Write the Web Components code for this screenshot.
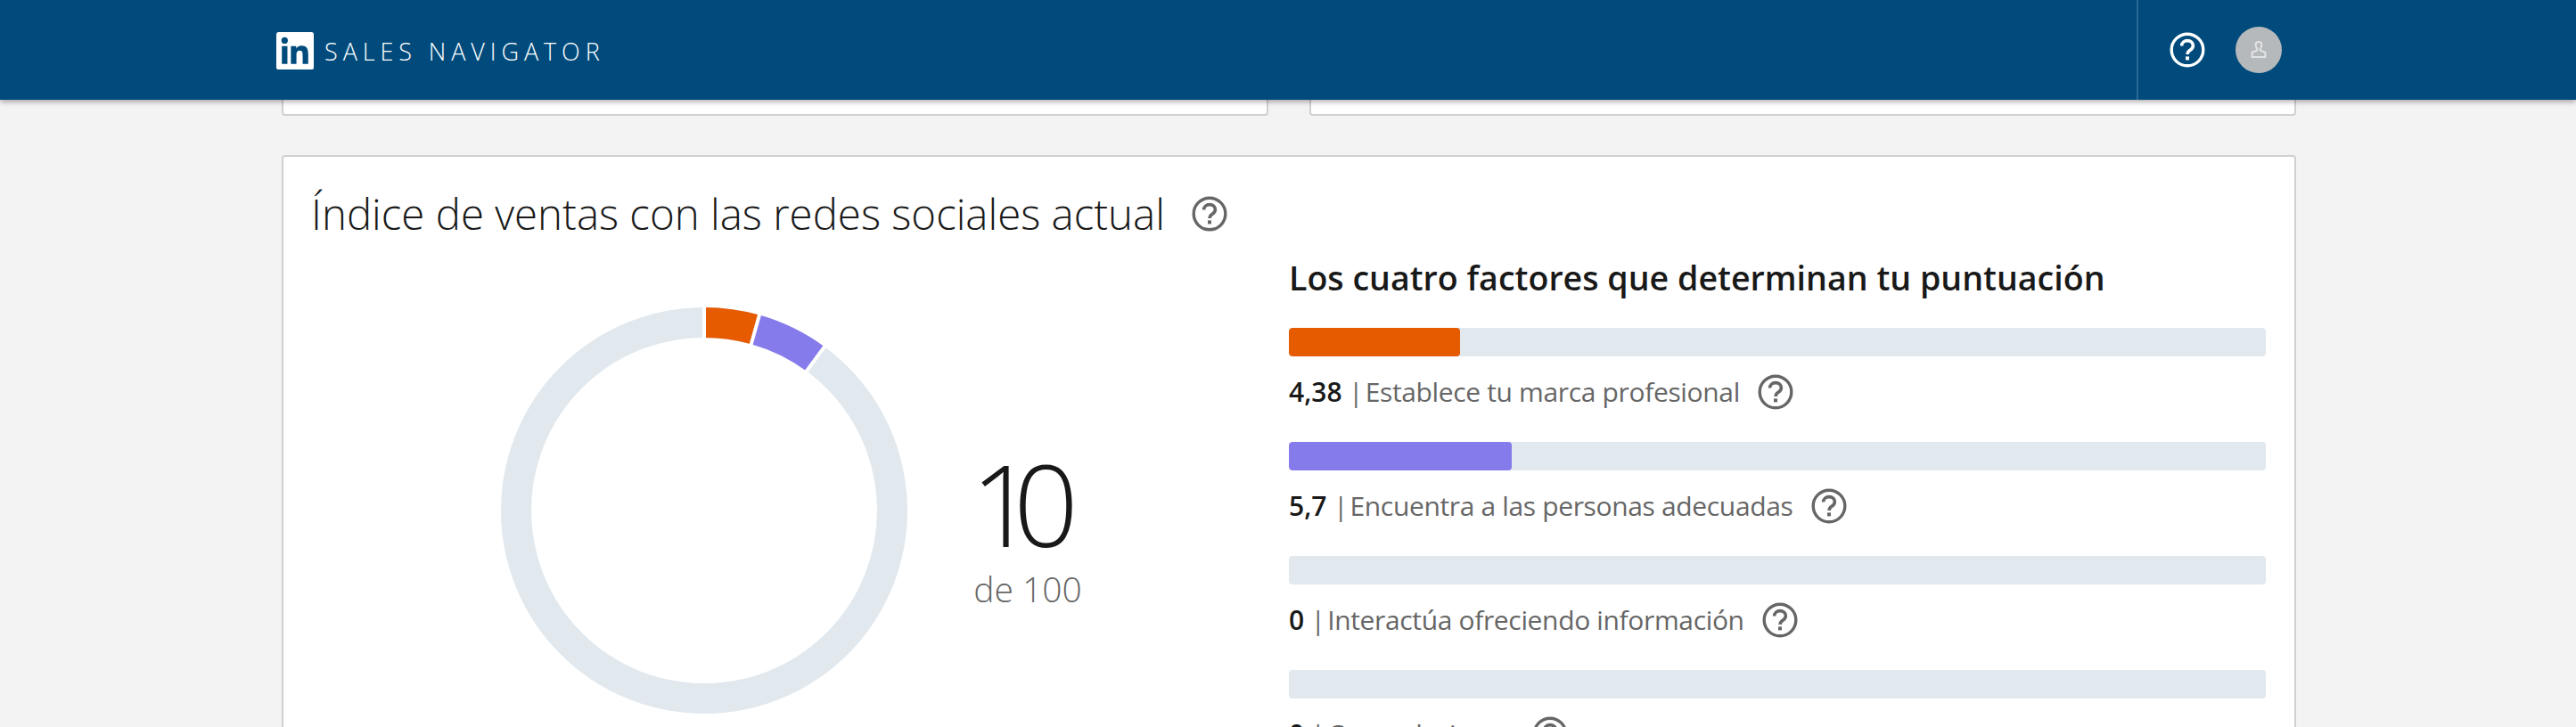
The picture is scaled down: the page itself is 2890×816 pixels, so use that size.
<!DOCTYPE html>
<html lang="es">
<head>
<meta charset="utf-8">
<title>Sales Navigator</title>
<style>
  html, body { margin: 0; height: 816px; overflow: hidden; background: #f3f3f3; }
  body { font-family: "Open Sans", "Noto Sans", sans-serif; color: #191919; }
</style>
</head>
<body>
<sn-header></sn-header>
<sn-page>
  <sn-ssi-card>
    <sn-donut slot="chart" score="10" max="100"></sn-donut>
    <sn-factor slot="factors" value="4,38" pct="17.5" color="#e65a00" label="Establece tu marca profesional"></sn-factor>
    <sn-factor slot="factors" value="5,7" pct="22.8" color="#867bea" label="Encuentra a las personas adecuadas"></sn-factor>
    <sn-factor slot="factors" value="0" pct="0" color="#867bea" label="Interactúa ofreciendo información"></sn-factor>
    <sn-factor slot="factors" value="0" pct="0" color="#867bea" label="Crea relaciones"></sn-factor>
  </sn-ssi-card>
</sn-page>
<script>
const HELP_SVG = `<svg viewBox="0 0 40 40" fill="none" stroke="currentColor" stroke-width="3.4">
  <circle cx="20" cy="20" r="17.8"/>
  <path d="M13.6 15.6c0-3.7 2.8-6 6.4-6s6.4 2.2 6.4 5.6c0 2.6-1.5 3.9-3.3 5.1-1.9 1.300-3 2.300-3 4.700" stroke-width="3.6"/>
  <rect x="18" y="27.400" width="4" height="4" fill="currentColor" stroke="none"/>
</svg>`;

class SnHelp extends HTMLElement {
  connectedCallback() {
    this.attachShadow({ mode: 'open' });
    this.shadowRoot.innerHTML = `
      <style>
        :host { display: inline-flex; width: 40px; height: 40px; color: #666; flex: none; }
        svg { width: 100%; height: 100%; display: block; }
      </style>
      ${HELP_SVG}
    `;
  }
}
customElements.define('sn-help', SnHelp);

class SnHeader extends HTMLElement {
  connectedCallback() {
    this.attachShadow({ mode: 'open' });
    this.shadowRoot.innerHTML = `
      <style>
        :host {
          display: flex;
          position: relative;
          z-index: 10;
          height: 112px;
          background: #004b7c;
          box-shadow: 0 2px 6px rgba(0,0,0,0.35);
          padding-left: 310px;
          align-items: center;
        }
        .logo { width: 42px; height: 42px; display: block; flex: none; margin-top: 1px; }
        .name {
          margin: 2px 0 0 12px;
          font: 300 27px "Open Sans", sans-serif;
          letter-spacing: 5.9px;
          color: #fff;
          white-space: nowrap;
        }
        .actions {
          margin-left: auto;
          width: 493px;
          height: 100%;
          box-sizing: border-box;
          border-left: 2px solid #2b6a94;
          display: flex;
          align-items: center;
          padding-left: 35px;
        }
        sn-help { color: #fff; }
        .avatar {
          width: 52px;
          height: 52px;
          margin-left: 34px;
          border-radius: 50%;
          background: #b6b9bc;
          display: flex;
          align-items: center;
          justify-content: center;
        }
        .avatar svg { width: 22px; height: 22px; }
      </style>
      <svg class="logo" viewBox="0 0 24 24">
        <rect width="24" height="24" rx="1.500" fill="#fff"/>
        <path fill="#004b7c" d="M20.447 20.452h-3.554v-5.569c0-1.328-.027-3.037-1.852-3.037-1.853 0-2.136 1.445-2.136 2.939v5.667H9.351V9h3.414v1.561h.046c.477-.9 1.637-1.85 3.37-1.85 3.601 0 4.267 2.37 4.267 5.455v6.286zM5.337 7.433a2.062 2.062 0 0 1-2.063-2.065 2.064 2.064 0 1 1 2.063 2.065zm1.782 13.019H3.555V9h3.564v11.452z"/>
      </svg>
      <span class="name">SALES NAVIGATOR</span>
      <div class="actions">
        <sn-help></sn-help>
        <div class="avatar">
          <svg viewBox="0 0 22 22" fill="none" stroke="#e3e4e5" stroke-width="2">
            <path d="M11 2c-2.200 0-3.400 1.500-3.400 3.600 0 2 .9 3.300 1.700 4.100v1.600L3.600 14v5h14.800v-5l-5.700-2.700V9.700c.8-.8 1.700-2.100 1.700-4.100C14.400 3.500 13.200 2 11 2z"/>
          </svg>
        </div>
      </div>
    `;
  }
}
customElements.define('sn-header', SnHeader);

class SnPage extends HTMLElement {
  connectedCallback() {
    this.attachShadow({ mode: 'open' });
    this.shadowRoot.innerHTML = `
      <style>
        :host { display: block; padding: 0 314px 0 316px; }
        .top { display: grid; grid-template-columns: 1fr 1fr; column-gap: 46px; }
        .stub {
          height: 16px;
          background: #fff;
          border: 2px solid #d0d0d0;
          border-top: 0;
          border-radius: 0 0 4px 4px;
        }
        .rest { margin-top: 44px; }
      </style>
      <div class="top"><div class="stub"></div><div class="stub"></div></div>
      <div class="rest"><slot></slot></div>
    `;
  }
}
customElements.define('sn-page', SnPage);

class SnSsiCard extends HTMLElement {
  connectedCallback() {
    this.attachShadow({ mode: 'open' });
    this.shadowRoot.innerHTML = `
      <style>
        :host {
          display: block;
          box-sizing: border-box;
          background: #fff;
          border: 2px solid #d0d0d0;
          border-radius: 4px;
          padding: 31px 32px 0 31px;
        }
        .title { display: flex; align-items: center; gap: 30px; height: 66px; }
        h2 { margin: 0; font: 350 47.4px/66px "Open Sans", sans-serif; color: #191919; white-space: nowrap; }
        .cols { display: grid; grid-template-columns: 1097px 1096px; }
        .chart { padding-top: 71px; }
        h3 { margin: 11px 0 0; font: 600 37.6px/56px "Open Sans", sans-serif; color: #191919; white-space: nowrap; }
        .factors { display: flex; flex-direction: column; margin-top: 28px; }
      </style>
      <div class="title"><h2>Índice de ventas con las redes sociales actual</h2><sn-help></sn-help></div>
      <div class="cols">
        <div class="chart"><slot name="chart"></slot></div>
        <div>
          <h3>Los cuatro factores que determinan tu puntuación</h3>
          <div class="factors"><slot name="factors"></slot></div>
        </div>
      </div>
    `;
  }
}
customElements.define('sn-ssi-card', SnSsiCard);

class SnDonut extends HTMLElement {
  connectedCallback() {
    this.attachShadow({ mode: 'open' });
    const sep = [0, 15.77, 36.29].map(a =>
      `<line x1="229" y1="0" x2="229" y2="42" stroke="#fff" stroke-width="4" transform="rotate(${a} 229 229)"/>`
    ).join('');
    this.shadowRoot.innerHTML = `
      <style>
        :host { display: flex; align-items: center; padding-left: 212px; }
        svg { width: 458px; height: 458px; display: block; flex: none; }
        .score { width: 140px; margin-left: 64px; margin-top: 36px; display: flex; flex-direction: column; align-items: center; }
        .num { font: 300 128px/140px "Open Sans", sans-serif; letter-spacing: -25px; margin-right: 32px; color: #191919; }
        .of { font: 300 39px/52px "Open Sans", sans-serif; color: #666; white-space: nowrap; }
      </style>
      <svg viewBox="0 0 458 458" fill="none" stroke-width="34">
        <circle cx="229" cy="229" r="211" stroke="#e1e8ee"/>
        <g transform="rotate(-90 229 229)">
          <circle cx="229" cy="229" r="211" pathLength="100" stroke="#e65a00" stroke-dasharray="4.38 95.62"/>
          <circle cx="229" cy="229" r="211" pathLength="100" stroke="#867bea" stroke-dasharray="5.7 94.3" stroke-dashoffset="-4.38"/>
        </g>
        ${sep}
      </svg>
      <div class="score">
        <div class="num">${this.getAttribute('score')}</div>
        <div class="of">de ${this.getAttribute('max')}</div>
      </div>
    `;
  }
}
customElements.define('sn-donut', SnDonut);

class SnFactor extends HTMLElement {
  connectedCallback() {
    this.attachShadow({ mode: 'open' });
    this.shadowRoot.innerHTML = `
      <style>
        :host { display: block; height: 128px; font: 400 30px/40px "Open Sans", sans-serif; color: #666; }
        .track { height: 32px; border-radius: 4px; background: #e1e8ee; overflow: hidden; }
        .fill { height: 100%; border-radius: 4px; background: ${this.getAttribute('color')}; width: ${this.getAttribute('pct')}%; }
        .row { display: flex; align-items: center; gap: 20px; margin-top: 20px; height: 40px; white-space: nowrap; letter-spacing: -0.35px; }
        b { font-weight: 600; color: #191919; letter-spacing: 0; }
        .sep { margin-right: -5px; }
      </style>
      <div class="track"><div class="fill"></div></div>
      <div class="row"><span><b>${this.getAttribute('value')}</b> <span class="sep">|</span> ${this.getAttribute('label')}</span><sn-help></sn-help></div>
    `;
  }
}
customElements.define('sn-factor', SnFactor);
</script>
</body>
</html>
